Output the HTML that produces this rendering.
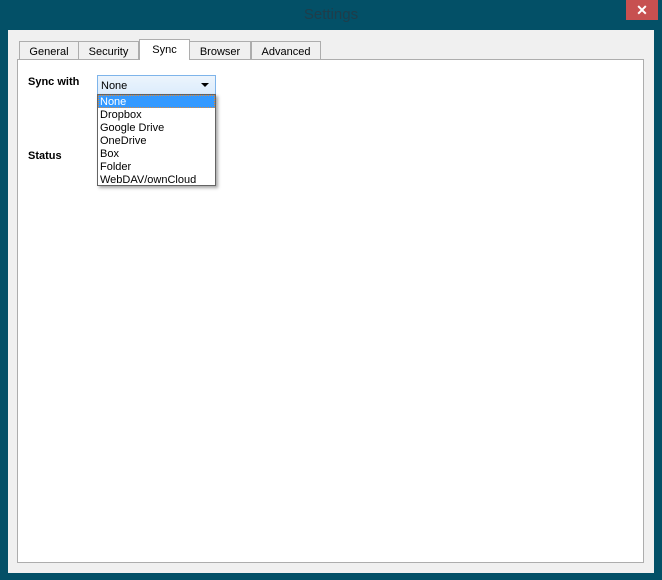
<!DOCTYPE html>
<html><head><style>
body{margin:0;width:662px;height:580px;background:#035067;position:relative;overflow:hidden;font-family:"Liberation Sans",Tahoma,sans-serif;font-size:11px;color:#000}
.title{position:absolute;left:0;top:6px;width:662px;text-align:center;font-size:15px;color:#1f3d4a}
.close{position:absolute;left:626px;top:0;width:32px;height:20px;background:#c75050;color:#fff;text-align:center;font-size:14px;line-height:20px;font-weight:bold}
.client{position:absolute;left:8px;top:30px;width:646px;height:543px;background:#f0f0f0}
.panel{position:absolute;left:17px;top:59px;width:627px;height:504px;background:#fff;border:1px solid #adadad;box-sizing:border-box}
.tab{position:absolute;top:41px;height:18px;background:#f0f0f0;border:1px solid #adadad;border-bottom:none;box-sizing:border-box;text-align:center;line-height:20px}
.tab.sel{top:39px;height:21px;background:#fff;z-index:2;line-height:21px}
.lbl{position:absolute;font-weight:bold}
.combo{position:absolute;left:97px;top:75px;width:119px;height:20px;box-sizing:border-box;border:1px solid #7eb4ea;background:linear-gradient(#ecf4fc,#dcecfc);line-height:21px;padding-left:3px}
.arrow{position:absolute;right:6px;top:7px;width:0;height:0;border-left:4px solid transparent;border-right:4px solid transparent;border-top:4px solid #000}
.list{position:absolute;left:97px;top:94px;width:119px;height:92px;box-sizing:border-box;border:1px solid #646464;background:#fff;box-shadow:2px 2px 3px rgba(0,0,0,.35)}
.it{height:13px;line-height:15px;padding-left:2px}
.it.h{background:#3399ff;color:#fff;outline:1px dotted #e08a3a;outline-offset:-1px}
</style></head><body>
<div class="title">Settings</div>
<div class="close">✕</div>
<div class="client"></div>
<div class="panel"></div>
<div class="tab" style="left:19px;width:60px">General</div>
<div class="tab" style="left:78px;width:61px">Security</div>
<div class="tab sel" style="left:139px;width:51px">Sync</div>
<div class="tab" style="left:189px;width:62px">Browser</div>
<div class="tab" style="left:251px;width:70px">Advanced</div>
<div class="lbl" style="left:28px;top:76px">Sync with</div>
<div class="lbl" style="left:28px;top:150px">Status</div>
<div class="combo">None<div class="arrow"></div></div>
<div class="list">
<div class="it h">None</div><div class="it">Dropbox</div><div class="it">Google Drive</div><div class="it">OneDrive</div><div class="it">Box</div><div class="it">Folder</div><div class="it">WebDAV/ownCloud</div>
</div>
</body></html>
